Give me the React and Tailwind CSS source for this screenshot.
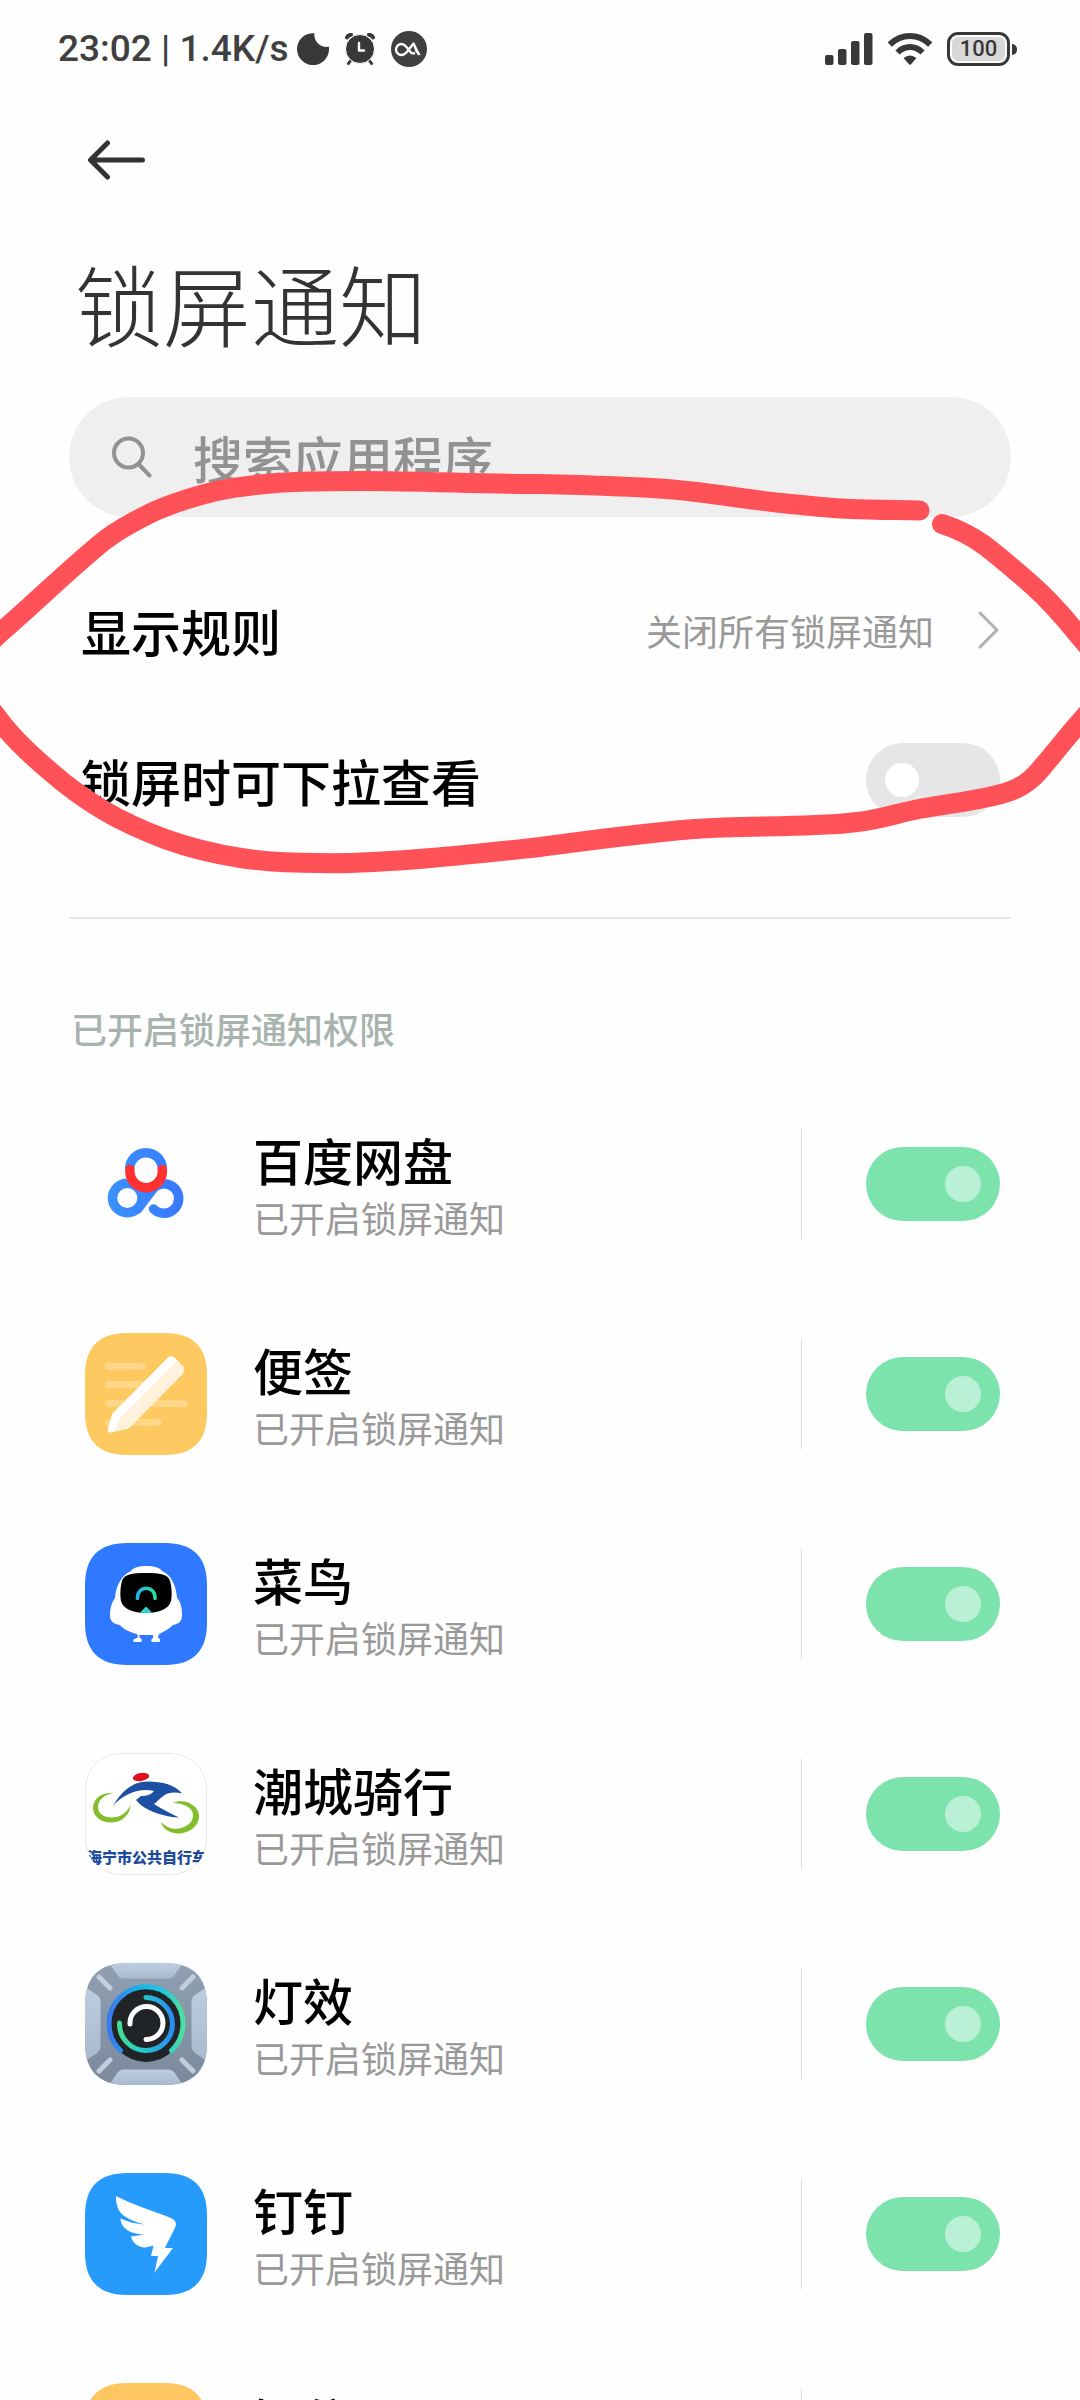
import React, { useState } from 'react';

const SQUIRCLE =
  'M0 42C0 14 14 0 42 0H80C108 0 122 14 122 42V80C122 108 108 122 80 122H42C14 122 0 108 0 80Z';

function AppIcon({ id, children }) {
  return (
    <svg viewBox="0 0 122 122" className="w-[122px] h-[122px] shrink-0" aria-hidden="true">
      <defs>
        <clipPath id={`${id}-clip`}>
          <path d={SQUIRCLE} />
        </clipPath>
      </defs>
      <g clipPath={`url(#${id}-clip)`}>{children}</g>
    </svg>
  );
}

function NetdiskIcon() {
  return (
    <AppIcon id="netdisk">
      <defs>
        <linearGradient id="netdisk-blue" gradientUnits="userSpaceOnUse" x1="23" y1="0" x2="99" y2="0">
          <stop offset="0" stopColor="#3a92ff" />
          <stop offset="1" stopColor="#3878ff" />
        </linearGradient>
      </defs>
      <g fill="none" stroke="url(#netdisk-blue)" strokeWidth="9.5" strokeLinecap="round">
        <circle cx="42.3" cy="75" r="14.8" />
        <path d="M68.5 86A14.8 14.8 0 1 0 69 64.5L52.5 86" />
        <path d="M44.7 46A16.3 16.3 0 0 1 77.3 46" strokeLinecap="butt" />
      </g>
      <path d="M44.9 46.5V48.5A16.2 16.2 0 0 0 77.3 48.5V46.5" fill="none" stroke="#ff3030" strokeWidth="9.5" strokeLinecap="round" />
    </AppIcon>
  );
}

function NotesIcon() {
  return (
    <AppIcon id="notes">
      <rect width="122" height="122" fill="#fec960" />
      <g fill="#fff" opacity="0.25">
        <rect x="20" y="30" width="40" height="7" rx="3.5" />
        <rect x="20" y="48" width="50" height="7" rx="3.5" />
        <rect x="20" y="67" width="83" height="7" rx="3.5" />
        <rect x="20" y="86" width="57" height="7" rx="3.5" />
      </g>
      <path d="M82.5 25Q86 21.5 90 25L97.5 33Q101 37 97.5 41L45 94Q43.5 95.5 41 96L26 99.5Q22 99.5 23 95.5L26.5 83Q27 81 28.5 79.5Z" fill="#fff" />
      <path d="M91.5 28L97.5 33.5Q101 37 97.5 41L45 94Q43.5 95.5 41 96L29 98.5L36 84Z" fill="#fff2dc" />
    </AppIcon>
  );
}

function CainiaoIcon() {
  return (
    <AppIcon id="cainiao">
      <defs>
        <linearGradient id="cainiao-eye" x1="0" y1="0" x2="1" y2="0">
          <stop offset="0" stopColor="#21b7e8" />
          <stop offset="1" stopColor="#25e0a8" />
        </linearGradient>
      </defs>
      <rect width="122" height="122" fill="#2e79ff" />
      <path d="M61 23C69 23 75 24.5 77 28C86 32 91 42 92 55C95 58 97 63 97 72C97 78 94 81 88 82C83 87 76 90 74 91L73 95C76 95.5 75.5 99 74 99H67Q65 97 68 95V92H54L55 95C57 96 57.5 97.5 56 99H49Q46.5 96.5 51 95.5L53 94L52 91C44 89 38 86 35 82C28 81 25 78 25 72C25 63 28 58 30 55C31 42 37 32 46 28C48 24.5 54 23 61 23Z" fill="#fff" />
      <path d="M61 30C75 30 83 31 85 38C87 45 87 53 86 58C84 66 74 70 61 70C48 70 38 66 36 58C35 53 35 45 37 38C39 31 47 30 61 30Z" fill="#000" />
      <path d="M52.5 55.5V54A8.7 8.7 0 0 1 70 54V55.5" fill="none" stroke="url(#cainiao-eye)" strokeWidth="3.6" strokeLinecap="round" />
      <path d="M61 63.5L67 69.5Q61 70.5 55 69.5Z" fill="#2ed8cf" />
    </AppIcon>
  );
}

function BikeIcon() {
  return (
    <AppIcon id="bike">
      <rect width="122" height="122" fill="#fff" />
      <path d={SQUIRCLE} fill="none" stroke="#d4d4d4" strokeWidth="1" />
      <ellipse cx="56" cy="24" rx="8.2" ry="4" transform="rotate(-10 56 24)" fill="#e0101e" />
      <path d="M28 40C15 39 8 47 8 55C8 64 17 70 27 69.5C37 69 45 62 45.5 52C42 60 35 64.5 27 64.5C18 64.5 13 60 13 54C13 47 19 42 28 40Z" fill="#82be2c" />
      <path d="M88 50C99 45 114 52 114 63C114 74 103 81 92 80.5C84 80 77 75 76 69C82 75 88 76.5 94 75.5C103 74 109 68 108 61C107 54 98 50 88 50Z" fill="#82be2c" />
      <path d="M27.5 54C35 40 47 28.5 62 28.5C78 28.5 90 32 97 40.5C90 39 84 39 79 42.5C75 45 73 48 69 51C77 56 86 61 94 64.5C83 64 72 61 64 57C58 54 54 51 51 47L56 43C61 43 66 42 69 38C61 36 52 37 45 40.5C37 44 32 48 27.5 54Z" fill="#1d50a4" />
      <text x="2" y="110" fontSize="15" fontWeight="900" fill="#1d4b9b" className="font-['Noto_Sans_CJK_SC',sans-serif]">
        海宁市公共自行车
      </text>
    </AppIcon>
  );
}

function LightIcon() {
  return (
    <AppIcon id="light">
      <defs>
        <linearGradient id="light-frame" x1="0" y1="0" x2="0" y2="1">
          <stop offset="0" stopColor="#909fb2" />
          <stop offset="1" stopColor="#7c899d" />
        </linearGradient>
        <linearGradient id="light-panel" x1="0" y1="0" x2="0" y2="1">
          <stop offset="0" stopColor="#bccde0" />
          <stop offset="1" stopColor="#a9bad0" />
        </linearGradient>
        <linearGradient id="light-outer" x1="0" y1="0" x2="1" y2="0">
          <stop offset="0" stopColor="#3979ee" />
          <stop offset="0.4" stopColor="#1db2e8" />
          <stop offset="0.7" stopColor="#1cc5e4" />
          <stop offset="1" stopColor="#4de09a" />
        </linearGradient>
        <linearGradient id="light-inner" x1="0" y1="0" x2="1" y2="0">
          <stop offset="0" stopColor="#47dd92" />
          <stop offset="0.4" stopColor="#21cdc9" />
          <stop offset="1" stopColor="#2b8df0" />
        </linearGradient>
      </defs>
      <rect width="122" height="122" fill="url(#light-frame)" />
      <g fill="url(#light-panel)">
        <path d="M24 0H98L89 13Q87 15.5 84 15.5H38Q35 15.5 33 13Z" />
        <path d="M24 122H98L89 109Q87 106.5 84 106.5H38Q35 106.5 33 109Z" />
        <path d="M0 24L12 32Q15.5 34.5 15.5 38V84Q15.5 87 12 90L0 98Z" />
        <path d="M122 24L110 32Q106.5 34.5 106.5 38V84Q106.5 87 110 90L122 98Z" />
      </g>
      <g stroke="#c0cede" strokeWidth="5" strokeLinecap="round">
        <path d="M14 14L25 25M108 14L97 25M14 108L25 97M108 108L97 97" />
      </g>
      <circle cx="61" cy="61" r="38" fill="#202427" />
      <g fill="none" strokeLinecap="round">
        <path d="M35.5 87.5A37 37 0 1 1 86.5 87.5" stroke="url(#light-outer)" strokeWidth="5" />
        <path d="M61 34.5A26.5 26.5 0 1 1 34.5 60" stroke="url(#light-inner)" strokeWidth="5" />
        <path d="M45 61A16.5 16.5 0 1 1 61 76.5" stroke="#fff" strokeWidth="5" />
      </g>
    </AppIcon>
  );
}

function DingtalkIcon() {
  return (
    <AppIcon id="dingtalk">
      <rect width="122" height="122" fill="#279bfb" />
      <path d="M32 23.5C46 31 68 38 86 45Q92.5 48 90.5 53.5C88 60 83 68 80 75H88L69.5 99.5L73 83H66L68.5 72.5C64 74 60 75 56.5 74C51 73 47 68 46 63.5L60 61.5C48 61.5 36 57 35.5 45.5C43 49 51 51 60 51.5C47 48 35 43.5 32.5 34Q30.5 27 31 24Q31.3 23 32 23.5Z" fill="#fff" />
    </AppIcon>
  );
}

function MessageIcon() {
  return (
    <AppIcon id="message">
      <rect width="122" height="122" fill="#fec660" />
      <path d="M61 32C82 32 96 44 96 60C96 76 82 88 61 88L42 96L44 84C33 79 26 71 26 60C26 44 40 32 61 32Z" fill="#fff" />
    </AppIcon>
  );
}

function StatusIcons() {
  return (
    <div className="flex items-center gap-[15px] text-[#383838]">
      <svg viewBox="0 0 32 32" className="w-8 h-8" fill="currentColor">
        <path d="M17.5 0.2C16 7 23 16 31.8 13.5A16 16 0 1 1 17.5 0.2Z" />
      </svg>
      <svg viewBox="0 0 32 32" className="w-8 h-8">
        <g stroke="currentColor" strokeLinecap="round">
          <path d="M3 4.5Q4 2 7 1.8M29 4.5Q28 2 25 1.8" strokeWidth="4" fill="none" />
          <path d="M7 27L4.5 30.5M25 27L27.5 30.5" strokeWidth="3" />
        </g>
        <circle cx="16" cy="16" r="14.5" fill="currentColor" stroke="#fff" strokeWidth="1" />
        <path d="M15 10V17.5H20" fill="none" stroke="#fff" strokeWidth="2.4" strokeLinecap="round" strokeLinejoin="round" />
      </svg>
      <svg viewBox="0 0 36 36" className="w-9 h-9">
        <circle cx="18" cy="18" r="18" fill="#404040" />
        <path d="M28 24L22.5 12.5L17.5 19C14.5 23 12.5 24 10.5 24A5.5 5.5 0 0 1 10.5 13C13.5 13 15 15 17.5 18.5S21 23 24 22" fill="none" stroke="#fff" strokeWidth="2.4" strokeLinejoin="round" />
        <path d="M22 12L30 24.5L24.5 21Z" fill="#fff" />
      </svg>
    </div>
  );
}

function StatusBar() {
  return (
    <header className="flex items-center justify-between h-[98px] pl-[58px] pr-[63px]">
      <div className="flex items-center gap-2">
        <span className="font-['Roboto','Noto_Sans',sans-serif] font-medium text-[37px] leading-[48px] text-[#404040] whitespace-pre">
          23:02 | 1.4K/s
        </span>
        <StatusIcons />
      </div>

      <div className="flex items-center gap-[15px] text-[#383838]">
        <svg viewBox="0 0 48 32" className="w-12 h-8" fill="currentColor">
          <rect x="0" y="22" width="8.5" height="10" rx="2" />
          <rect x="13" y="16" width="8.5" height="16" rx="2" />
          <rect x="26" y="8" width="8.5" height="24" rx="2" />
          <rect x="39" y="0" width="8.5" height="32" rx="2" />
        </svg>
        <svg viewBox="0 0 44 32" className="w-11 h-8">
          <g fill="none" stroke="currentColor" strokeWidth="6">
            <path d="M1.8 11.5Q10.5 3 22 3T42.2 11.5" />
            <path d="M9.5 19.5Q15 14 22 14T34.500 19.5" />
          </g>
          <path d="M15.5 25Q22 20 28.5 25L23 31.2Q22 32.3 21 31.2Z" fill="currentColor" />
        </svg>
        <div className="flex items-center gap-0.5">
          <div className="flex h-[34px] w-[63px] rounded-[11px] border-[3px] border-[#383838] p-0.5">
            <span className="flex-1 rounded-[6px] bg-[#d8d8d8] text-center font-['Roboto','Noto_Sans',sans-serif] font-medium text-[22px] leading-[24px]">
              100
            </span>
          </div>
          <span className="w-[5px] h-[11px] rounded-r-full bg-[#383838]" />
        </div>
      </div>
    </header>
  );
}

function Switch({ checked, onChange, label }) {
  return (
    <input
      type="checkbox"
      role="switch"
      aria-label={label}
      checked={checked}
      onChange={onChange}
      className="appearance-none shrink-0 flex items-center w-[134px] h-[74px] rounded-full bg-[#e6e6e6] px-[19px] cursor-pointer before:block before:w-[34px] before:h-[34px] before:rounded-full before:bg-white checked:justify-end checked:bg-[#7de3ac] checked:before:w-9 checked:before:h-9 checked:before:bg-[#baf0d5]"
    />
  );
}

const apps = [
  { name: '百度网盘', icon: <NetdiskIcon /> },
  { name: '便签', icon: <NotesIcon /> },
  { name: '菜鸟', icon: <CainiaoIcon /> },
  { name: '潮城骑行', icon: <BikeIcon /> },
  { name: '灯效', icon: <LightIcon /> },
  { name: '钉钉', icon: <DingtalkIcon /> },
  { name: '短信', icon: <MessageIcon /> },
];

function AppRow({ name, icon }) {
  const [on, setOn] = useState(true);

  return (
    <li className="flex items-center h-[210px] pl-4 pr-[11px]">
      {icon}
      <div className="flex-1 min-w-0 ml-[46px]">
        <div className="text-[50px] leading-[66px] font-medium text-black">{name}</div>
        <div className="text-[36px] leading-[50px] text-[#999999]">
          {on ? '已开启锁屏通知' : '已关闭锁屏通知'}
        </div>
      </div>
      <span className="w-px h-[110px] bg-[#d9d9d9] mr-16" />
      <Switch checked={on} onChange={() => setOn(!on)} label={name} />
    </li>
  );
}

// hand-drawn marker loop over the two lock screen settings
function MarkerLoop() {
  return (
    <svg
      viewBox="0 0 1080 420"
      className="absolute inset-x-0 top-[470px] w-full pointer-events-none"
      fill="none"
      stroke="#ff5158"
      strokeWidth="20"
      strokeLinecap="round"
      strokeLinejoin="round"
      aria-hidden="true"
    >
      <path d="M942 54C958 59 970 65 984 75C1000 87 1016 101 1032 115C1050 131 1064 147 1080 167C1110 200 1110 220 1080 252C1070 263 1060 276 1050 288C1043 296 1038 303 1031 309C1022 317 1013 321 1001 324C975 331 947 334 919 339C898 343 878 350 857 352C843 354 829 355 815 355C775 357 735 356 695 359C643 363 592 370 540 377C503 381 467 385 430 388C393 391 357 394 320 393C293 393 267 392 241 388C215 384 190 378 165 369C144 361 123 352 103 340C85 329 68 317 52 303C33 287 15 271 0 251C-30 215 -30 190 0 163C35 133 69 99 105 70C118 60 131 53 145 46C158 39 172 34 186 29.5C206 23 227 18 248 16C269 13 289 12 310 11.5C327 11 345 11 362 11C422 11 481 14 540 14C583 15 625 16 667 19C705 22 743 29 781 33C804 35 827 38 850 39C873 40 896 40 919.5 40.5" />
    </svg>
  );
}

export default function App() {
  const [pullDown, setPullDown] = useState(false);
  const [query, setQuery] = useState('');

  return (
    <div className="relative h-screen overflow-hidden bg-[#fefefe] font-['Noto_Sans_CJK_SC',sans-serif]" lang="zh-CN">
      <StatusBar />

      <main className="px-[69px]">
        <div className="flex items-center h-[124px] pl-[18px]">
          <button type="button" aria-label="返回" className="cursor-pointer">
            <svg viewBox="0 0 60 42" className="w-[60px] h-[42px]" fill="none" stroke="#333" strokeWidth="5" strokeLinecap="round" strokeLinejoin="round">
              <path d="M55.5 21H4M20.5 4L3.5 21L20.5 38" />
            </svg>
          </button>
        </div>

        <h1 className="mt-5 mb-[35px] pl-1.5 text-[88px] leading-[120px] font-light text-[#333333]">锁屏通知</h1>

        <label className="flex items-center h-[120px] rounded-full bg-[#efefef] pl-[43px] pr-10">
          <svg viewBox="0 0 40 42" className="w-10 h-[42px] shrink-0" fill="none" stroke="#929292" strokeWidth="4" strokeLinecap="round">
            <circle cx="16.5" cy="17" r="14.5" />
            <path d="M27 28.5L37.5 39.5" />
          </svg>
          <input
            type="text"
            value={query}
            onChange={(e) => setQuery(e.target.value)}
            placeholder="搜索应用程序"
            aria-label="搜索应用程序"
            className="flex-1 min-w-0 ml-[41px] h-full bg-transparent outline-none text-[50px] font-medium placeholder:text-[#929292] placeholder:opacity-100"
          />
        </label>

        <section className="mt-[38px] pl-3 pr-[11px]">
          <button type="button" className="flex items-center justify-between w-full h-[150px] cursor-pointer">
            <span className="text-[50px] leading-[66px] font-medium text-black">显示规则</span>
            <span className="flex items-center gap-[44px] text-[36px] leading-[50px] text-[#999999]">
              关闭所有锁屏通知
              <svg viewBox="0 0 22 40" className="w-[22px] h-10" fill="none" stroke="#b0b0b0" strokeWidth="3" strokeLinecap="round" strokeLinejoin="round">
                <path d="M2 3L19 20L2 37" />
              </svg>
            </span>
          </button>
          <div className="flex items-center justify-between h-[150px]">
            <span className="text-[50px] leading-[66px] font-medium text-black">锁屏时可下拉查看</span>
            <Switch checked={pullDown} onChange={() => setPullDown(!pullDown)} label="锁屏时可下拉查看" />
          </div>
        </section>

        <hr className="mt-[62px] border-0 h-0.5 bg-[#e6e6e6]" />

        <h2 className="mt-[84px] pl-0.5 text-[36px] leading-[50px] font-medium text-[#a8b3ae]">已开启锁屏通知权限</h2>

        <ul className="mt-[26px]">
          {apps.map((app) => (
            <AppRow key={app.name} name={app.name} icon={app.icon} />
          ))}
        </ul>
      </main>

      <MarkerLoop />
    </div>
  );
}
